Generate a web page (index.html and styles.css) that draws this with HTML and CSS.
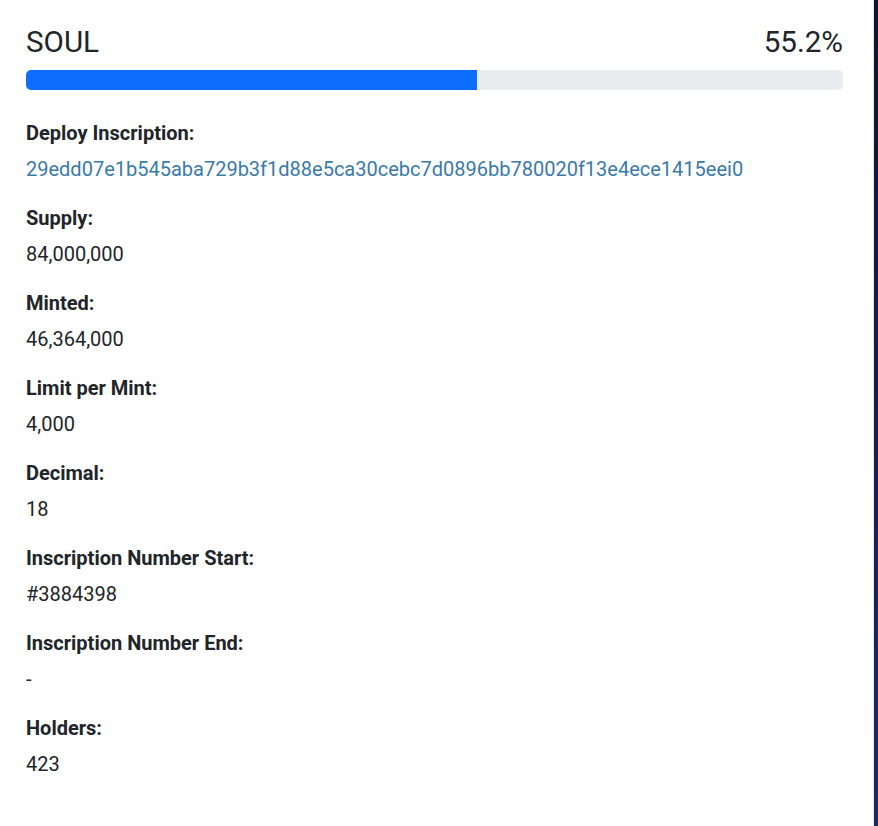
FILE: index.html
```html
<!DOCTYPE html>
<html>
<head>
<meta charset="utf-8">
<link rel="stylesheet" href="styles.css">
</head>
<body>
<div class="layout">
  <main class="panel">
    <div class="head">
      <span class="ticker">SOUL</span>
      <span class="pct">55.2%</span>
    </div>
    <div class="progress"><div class="progress-bar" style="width:55.2%"></div></div>
    <dl class="info">
      <div class="item"><dt>Deploy Inscription:</dt><dd><a class="link" href="#">29edd07e1b545aba729b3f1d88e5ca30cebc7d0896bb780020f13e4ece1415eei0</a></dd></div>
      <div class="item"><dt>Supply:</dt><dd>84,000,000</dd></div>
      <div class="item"><dt>Minted:</dt><dd>46,364,000</dd></div>
      <div class="item"><dt>Limit per Mint:</dt><dd>4,000</dd></div>
      <div class="item"><dt>Decimal:</dt><dd>18</dd></div>
      <div class="item"><dt>Inscription Number Start:</dt><dd>#3884398</dd></div>
      <div class="item"><dt>Inscription Number End:</dt><dd>-</dd></div>
      <div class="item"><dt>Holders:</dt><dd>423</dd></div>
    </dl>
  </main>
  <aside class="edge"></aside>
</div>
</body>
</html>
```

FILE: styles.css
```css
* { box-sizing: border-box; }
html, body {
  margin: 0;
  padding: 0;
  background: #ffffff;
  font-family: Roboto, "Liberation Sans", Arial, sans-serif;
  color: #212529;
}
.layout {
  display: flex;
  min-height: 826px;
}
.panel {
  flex: 1;
  padding: 25px 30px 0 26px;
  border-right: 1px solid #e4e6ea;
}
.edge {
  width: 4px;
  background: linear-gradient(to bottom, #0e1433, #1d2b5c);
}
.head {
  display: flex;
  justify-content: space-between;
  align-items: baseline;
  font-size: 29.6px;
  line-height: 35.5px;
}
.progress {
  margin-top: 9.5px;
  height: 20px;
  background: #e9ecef;
  border-radius: 5px;
  overflow: hidden;
}
.progress-bar {
  height: 100%;
  background: #0d6efd;
}
.info {
  margin: 28.4px 0 0 0;
}
.item {
  margin-bottom: 19.3px;
}
dt {
  font-weight: 700;
  font-size: 20px;
  line-height: 30px;
}
dd {
  margin: 5.7px 0 0 0;
  font-size: 20px;
  line-height: 30px;
}
.link {
  color: #3a7aa8;
  text-decoration: none;
}
```
